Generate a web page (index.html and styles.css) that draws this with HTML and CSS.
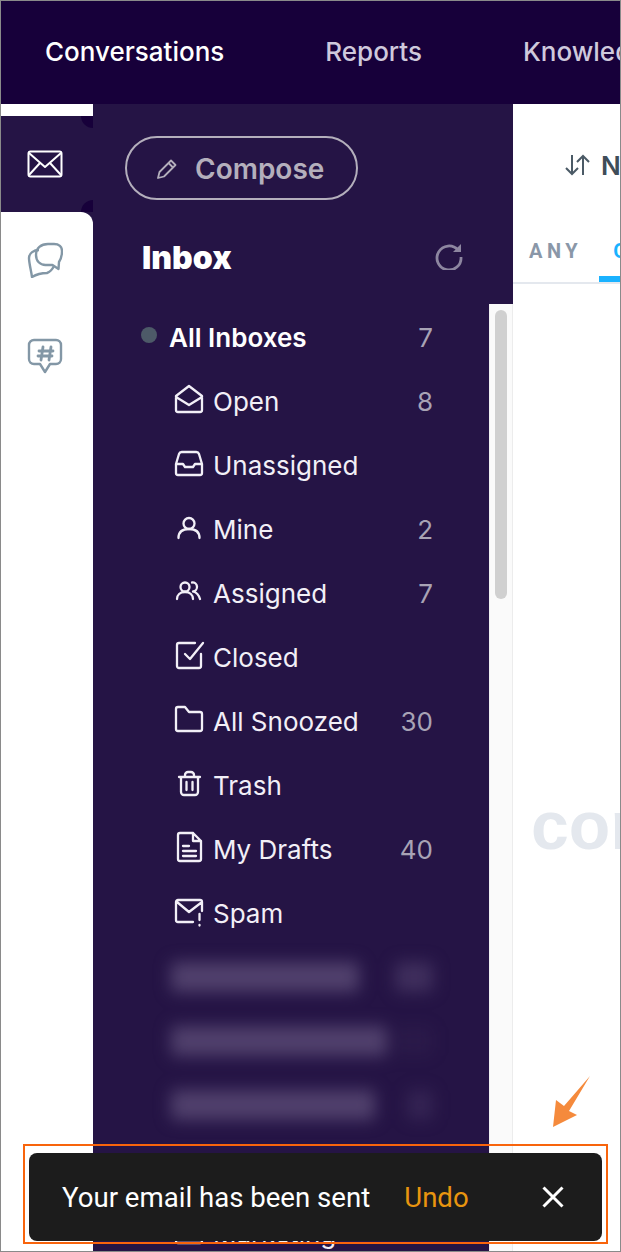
FILE: index.html
```html
<!DOCTYPE html>
<html>
<head>
<meta charset="UTF-8">
<title>Conversations</title>
<link rel="stylesheet" href="styles.css">
</head>
<body>
<div class="frame">
    <div class="topbar">
        <a class="nav-item active">Conversations</a>
        <a class="nav-item">Reports</a>
        <a class="nav-item">Knowledge</a>
    </div>

    <div class="main">
        <div class="rail">
            <div class="rail-top"></div>
            <div class="rail-active">
                <svg class="rail-icon" viewBox="0 0 36 28" fill="none" stroke="#fff" stroke-width="2" stroke-linejoin="round">
                    <rect x="1.5" y="1.5" width="33" height="25" rx="2"/>
                    <path d="M2 3l16 14L34 3M2 25l11-12M34 25L23 13"/>
                </svg>
            </div>
            <div class="rail-rest">
                <svg class="rail-icon chat" viewBox="0 0 36 36" fill="none" stroke="#8397a6" stroke-width="2.4" stroke-linejoin="round">
                    <path d="M9 13C9 6 14 2 21 2h6c5 0 8 3 8 7 0 4-1 8-3 11l-.5 7-6-4h-7C13 23 9 19 9 13z"/>
                    <path d="M12 8C7 8 2 11 2 16c0 5 2 12 3 19 5-3 10-4 15-4 3-1 5-3 7-7"/>
                </svg>
                <svg class="rail-icon tag" viewBox="0 0 36 38" fill="none" stroke="#8397a6" stroke-width="2.4" stroke-linejoin="round" stroke-linecap="round">
                    <path d="M7 2h22a5 5 0 0 1 5 5v14a5 5 0 0 1-5 5h-6l-5 8-5-8H7a5 5 0 0 1-5-5V7a5 5 0 0 1 5-5z"/>
                    <path d="M16 9l-2 13M24 9l-2 13M12 13h14M11 18h14" stroke-width="2.800"/>
                </svg>
            </div>
        </div>

        <div class="sidebar">
            <div class="sidebar-head">
                <button class="compose">
                    <svg viewBox="0 0 24 24" fill="none" stroke="#b4afbc" stroke-width="1.8" stroke-linejoin="round">
                        <path d="M3 21l1.5-6L16 3.500l4.500 4.500L9 19.500z"/>
                        <path d="M13.500 6l4.500 4.500"/>
                    </svg>
                    Compose
                </button>
                <div class="inbox-title">
                    <h2>Inbox</h2>
                    <svg class="refresh" viewBox="0 0 28 28" fill="none" stroke="#8d86a0" stroke-width="2.800">
                        <path d="M23 8a12 12 0 1 0 3 7"/>
                        <path d="M26 2v8h-8" fill="#8d86a0" stroke="none"/>
                    </svg>
                </div>
            </div>

            <div class="list-wrap">
                <div class="list">
                    <div class="row top-row">
                        <span class="dot"></span>
                        <span class="label">All Inboxes</span>
                        <span class="count">7</span>
                    </div>
                    <div class="row">
                        <svg class="icon" viewBox="0 0 30 30"><path d="M2 10L15 0l13 10v14a2 2 0 0 1-2 2H4a2 2 0 0 1-2-2zM2 11l13 8 13-8"/></svg>
                        <span class="label">Open</span>
                        <span class="count">8</span>
                    </div>
                    <div class="row">
                        <svg class="icon" viewBox="0 0 30 30"><path d="M8 2h14a3 3 0 0 1 3 2l3 10v9a2 2 0 0 1-2 2H4a2 2 0 0 1-2-2v-9L5 4a3 3 0 0 1 3-2zM2 14h7l2 3h8l2-3h7"/></svg>
                        <span class="label">Unassigned</span>
                    </div>
                    <div class="row">
                        <svg class="icon" viewBox="0 0 30 30"><circle cx="15" cy="9.500" r="5.500"/><path d="M4.500 24c0-6 4-9 10.500-9s10.500 3 10.500 9"/></svg>
                        <span class="label">Mine</span>
                        <span class="count">2</span>
                    </div>
                    <div class="row">
                        <svg class="icon" viewBox="0 0 30 30"><circle cx="11" cy="9" r="4.500"/><path d="M3 21c0-4 3-7 8-7s8 3 8 7M18 4.500a4.500 4.500 0 0 1 1 9c4 1 6 4 7 7.500"/></svg>
                        <span class="label">Assigned</span>
                        <span class="count">7</span>
                    </div>
                    <div class="row">
                        <svg class="icon" viewBox="0 0 30 30"><path d="M27 12v12a2 2 0 0 1-2 2H5a2 2 0 0 1-2-2V3a2 2 0 0 1 2-2h16M11 12l5 5L29 1"/></svg>
                        <span class="label">Closed</span>
                    </div>
                    <div class="row">
                        <svg class="icon" viewBox="0 0 30 30"><path d="M2 3a2 2 0 0 1 2-2h7l4 5h11a2 2 0 0 1 2 2v15a2 2 0 0 1-2 2H4a2 2 0 0 1-2-2z"/></svg>
                        <span class="label">All Snoozed</span>
                        <span class="count">30</span>
                    </div>
                    <div class="row">
                        <svg class="icon" viewBox="0 0 30 30"><path d="M7 7v15a3 3 0 0 0 3 3h11a3 3 0 0 0 3-3V7M5 7h21M11 7V5a3 3 0 0 1 3-3h3a3 3 0 0 1 3 3v2M12.500 12v8M18.500 12v8"/></svg>
                        <span class="label">Trash</span>
                    </div>
                    <div class="row">
                        <svg class="icon" viewBox="0 0 30 30"><path d="M4 1a2 2 0 0 1 2-2h13l8 8v18a2 2 0 0 1-2 2H6a2 2 0 0 1-2-2zM19-1v8h8M9 12h6M9 17h13M9 22h13"/></svg>
                        <span class="label">My Drafts</span>
                        <span class="count">40</span>
                    </div>
                    <div class="row">
                        <svg class="icon" viewBox="0 0 30 30"><path d="M28 13V4a2 2 0 0 0-2-2H4a2 2 0 0 0-2 2v18a2 2 0 0 0 2 2h15M3 4l12 10L28 4M25.500 16v6M25.500 27v.5"/></svg>
                        <span class="label">Spam</span>
                    </div>
                    <div class="blur-group">
                        <div class="blur-row"><span class="bar w1"></span><span class="bar num"></span></div>
                        <div class="blur-row"><span class="bar w2"></span><span class="bar num faint"></span></div>
                        <div class="blur-row"><span class="bar w3"></span><span class="bar num small"></span></div>
                    </div>
                    <div class="row"></div>
                    <div class="row">
                        <svg class="icon" viewBox="0 0 30 30"><path d="M2 5a2 2 0 0 1 2-2h22a2 2 0 0 1 2 2v18a2 2 0 0 1-2 2H4a2 2 0 0 1-2-2z"/></svg>
                        <span class="label">Marketing</span>
                    </div>
                </div>
                <div class="scrollbar"><div class="thumb"></div></div>
            </div>
        </div>

        <div class="content">
            <div class="sort">
                <svg viewBox="0 0 26 24" fill="none" stroke="#4b5a66" stroke-width="2">
                    <path d="M8 2v19M2 15l6 6 6-6M19 22V3M13 9l6-6 6 6"/>
                </svg>
                <span>Newest</span>
            </div>
            <div class="tabs">
                <span class="tab">ANY</span>
                <span class="tab current">OPEN</span>
            </div>
            <div class="empty">conversations</div>
        </div>
    </div>

    <svg class="arrow" viewBox="0 0 40 52"><path d="M38 1L17 36l8 4L1 52l3-27 8 6z" fill="#f58a3c"/></svg>

    <div class="toast-outline">
        <div class="toast">
            <span class="toast-text">Your email has been sent</span>
            <a class="undo">Undo</a>
            <svg class="close" viewBox="0 0 22 22" fill="none" stroke="#fff" stroke-width="3">
                <path d="M1.500 1.500l19 19M20.500 1.500l-19 19"/>
            </svg>
        </div>
    </div>
</div>
</body>
</html>
```

FILE: styles.css
```css
* {
    margin: 0;
    padding: 0;
    box-sizing: border-box;
}

html, body {
    width: 621px;
    height: 1252px;
    overflow: hidden;
    background: #fff;
}

.frame {
    position: relative;
    width: 621px;
    height: 1252px;
    border: 1px solid #8a8a8a;
    overflow: hidden;
    display: flex;
    flex-direction: column;
    font-family: 'Inter', sans-serif;
}

.topbar {
    height: 103px;
    flex: none;
    background: #17003a;
    display: flex;
    align-items: center;
    padding: 0 0 2px 44px;
    gap: 101px;
    white-space: nowrap;
}

.nav-item {
    font-size: 26px;
    font-weight: 500;
    color: #cfc9dc;
}

.nav-item.active {
    color: #fff;
}

.main {
    flex: 1;
    display: flex;
    min-height: 0;
}

.rail {
    width: 92px;
    flex: none;
    background: #251445;
    display: flex;
    flex-direction: column;
}

.rail-top {
    height: 12px;
    background: #fff;
}

.rail-active {
    position: relative;
    height: 96px;
    display: flex;
    align-items: center;
    justify-content: center;
    padding-right: 4px;
}

.rail-active::before,
.rail-active::after {
    content: "";
    position: absolute;
    right: 0;
    width: 12px;
    height: 12px;
    background: #17003a;
}

.rail-active::before {
    top: 0;
    border-bottom-left-radius: 12px;
}

.rail-active::after {
    bottom: 0;
    border-top-left-radius: 12px;
}

.rail-icon {
    display: block;
    width: 36px;
}

.rail-rest {
    flex: 1;
    background: #fff;
    border-top-right-radius: 12px;
    display: flex;
    flex-direction: column;
    align-items: center;
    padding: 30px 4px 0 0;
    gap: 60px;
}

.sidebar {
    width: 420px;
    flex: none;
    background: #251445;
    display: flex;
    flex-direction: column;
}

.sidebar-head {
    height: 200px;
    flex: none;
    padding: 32px 0 0 32px;
}

.compose {
    width: 233px;
    height: 64px;
    border: 2px solid #b4afbc;
    border-radius: 32px;
    background: transparent;
    color: #b4afbc;
    font-family: 'Inter', sans-serif;
    font-size: 28px;
    font-weight: 600;
    display: flex;
    align-items: center;
    gap: 16px;
    padding: 2px 0 0 28px;
}

.compose svg {
    width: 24px;
    height: 24px;
}

.inbox-title {
    display: flex;
    align-items: center;
    justify-content: space-between;
    padding: 38px 50px 0 17px;
}

.inbox-title h2 {
    font-size: 32px;
    font-weight: 900;
    color: #fff;
}

.refresh {
    width: 28px;
    height: 28px;
    margin-bottom: 4px;
}

.list-wrap {
    flex: 1;
    display: flex;
    min-height: 0;
}

.list {
    width: 396px;
    flex: none;
    padding: 1px 56px 0 48px;
    overflow: hidden;
}

.row {
    position: relative;
    height: 64px;
    display: flex;
    align-items: center;
    color: #f2eff7;
    font-size: 26px;
}

.label {
    flex: 1;
    margin-left: 9px;
}

.count {
    color: #a8a3b5;
}

.icon {
    width: 30px;
    height: 30px;
    overflow: visible;
    fill: none;
    stroke: #f2eff7;
    stroke-width: 2.3;
    stroke-linejoin: round;
    stroke-linecap: round;
    flex: none;
    margin-left: 33px;
}

.top-row {
    font-weight: 600;
    color: #fff;
}

.top-row .count {
    font-weight: 400;
}

.dot {
    position: absolute;
    left: 0;
    top: 22px;
    width: 16px;
    height: 16px;
    border-radius: 50%;
    background: #4d5a68;
}

.dot + .label {
    margin-left: 28px;
}

.blur-group {
    height: 192px;
    filter: blur(8px);
}

.blur-row {
    height: 64px;
    display: flex;
    align-items: center;
    justify-content: space-between;
    padding: 0 0 0 30px;
}

.bar {
    display: block;
    height: 30px;
    background: #50406c;
    border-radius: 4px;
}

.w1 {
    width: 188px;
}

.w2 {
    width: 216px;
}

.w3 {
    width: 204px;
}

.num {
    width: 38px;
    opacity: 0.6;
}

.num.faint {
    opacity: 0.12;
}

.num.small {
    width: 26px;
    opacity: 0.35;
}

.scrollbar {
    flex: 1;
    background: #fafafa;
    border-left: 1px solid #f0f0f0;
    border-right: 1px solid #ececec;
    padding: 6px 5px;
}

.thumb {
    width: 12px;
    height: 289px;
    border-radius: 6px;
    background: #d0d0d0;
}

.content {
    flex: 1;
    min-width: 0;
    overflow: hidden;
    display: flex;
    flex-direction: column;
    background: #fff;
}

.sort {
    height: 120px;
    flex: none;
    display: flex;
    align-items: center;
    padding: 2px 0 0 51px;
    gap: 11px;
    color: #3f4d59;
    font-size: 26px;
    font-weight: 600;
    white-space: nowrap;
}

.sort svg {
    width: 26px;
    height: 24px;
    flex: none;
}

.tabs {
    height: 60px;
    flex: none;
    display: flex;
    gap: 17px;
    padding-left: 16px;
    border-bottom: 2px solid #e4e8ee;
    white-space: nowrap;
}

.tab {
    font-family: 'Roboto', sans-serif;
    font-size: 20px;
    font-weight: 700;
    letter-spacing: 4.500px;
    color: #8a97a8;
    padding: 15px 0 0;
    height: 58px;
}

.tab.current {
    color: #1ab2ff;
    border-bottom: 6px solid #1ab2ff;
    padding-left: 14px;
}

.empty {
    margin: 506px 0 0 18px;
    font-family: 'Liberation Sans', sans-serif;
    font-size: 68px;
    font-weight: 700;
    line-height: 70px;
    color: #e4e8ee;
    white-space: nowrap;
}

.arrow {
    position: absolute;
    left: 551px;
    top: 1074px;
    width: 40px;
    height: 52px;
}

.toast-outline {
    position: absolute;
    left: 22px;
    top: 1143px;
    width: 585px;
    height: 100px;
    border: 2px solid #f8640c;
    padding: 7px 4px 0 4px;
}

.toast {
    height: 88px;
    background: #1c1c1c;
    border-radius: 8px;
    display: flex;
    align-items: center;
    padding: 0 38px 0 33px;
    font-family: 'Roboto', sans-serif;
    font-size: 27.600px;
    color: #fff;
}

.toast-text {
    white-space: nowrap;
}

.undo {
    margin-left: 34px;
    flex: 1;
    color: #e8950f;
}

.close {
    width: 22px;
    height: 22px;
    flex: none;
}
```
